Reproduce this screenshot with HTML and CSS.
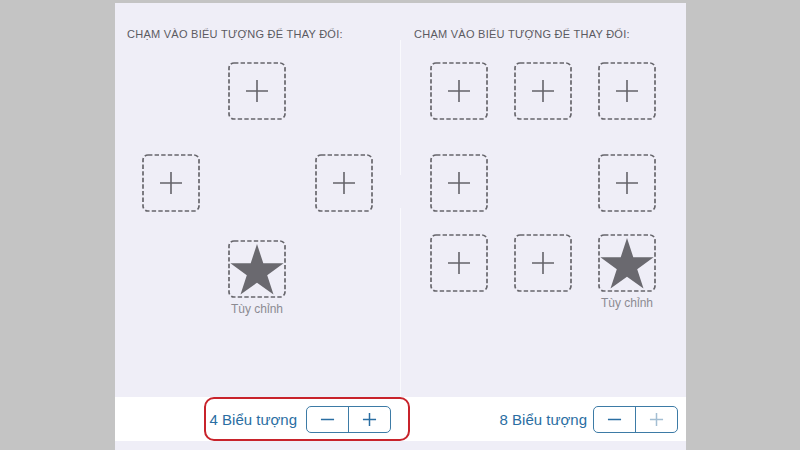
FILE: index.html
```html
<!DOCTYPE html>
<html lang="vi">
<head>
  <meta charset="UTF-8">
  <title>Biểu tượng</title>
  <link rel="stylesheet" href="styles.css">
</head>
<body>
  <div class="screen">
    <div class="panes">
      <!-- 4 icon layout -->
      <section class="pane pane-left">
        <h2 class="hint">CHẠM VÀO BIỂU TƯỢNG ĐỂ THAY ĐỔI:</h2>
        <div class="slots slots-4">
          <div class="slot a-top"><svg viewBox="0 0 58 58"><rect class="frame" x="1" y="1" width="56" height="56" rx="5"/><path class="plus" d="M18 29H40M29 18V40"/></svg></div>
          <div class="slot a-left"><svg viewBox="0 0 58 58"><rect class="frame" x="1" y="1" width="56" height="56" rx="5"/><path class="plus" d="M18 29H40M29 18V40"/></svg></div>
          <div class="slot a-right"><svg viewBox="0 0 58 58"><rect class="frame" x="1" y="1" width="56" height="56" rx="5"/><path class="plus" d="M18 29H40M29 18V40"/></svg></div>
          <div class="slot-custom a-bottom">
            <div class="slot"><svg viewBox="0 0 58 58"><rect class="frame" x="1" y="1" width="56" height="56" rx="5"/><polygon class="star" points="29,4 35.3,23.3 55.6,23.3 39.2,35.3 45.5,54.6 29,42.7 12.5,54.6 18.8,35.3 2.4,23.3 22.7,23.3"/></svg></div>
            <span class="slot-label">Tùy chỉnh</span>
          </div>
        </div>
      </section>

      <div class="divider"><span></span><span></span></div>

      <!-- 8 icon layout -->
      <section class="pane pane-right">
        <h2 class="hint">CHẠM VÀO BIỂU TƯỢNG ĐỂ THAY ĐỔI:</h2>
        <div class="slots slots-8">
          <div class="slot r1 c1"><svg viewBox="0 0 58 58"><rect class="frame" x="1" y="1" width="56" height="56" rx="5"/><path class="plus" d="M18 29H40M29 18V40"/></svg></div>
          <div class="slot r1 c2"><svg viewBox="0 0 58 58"><rect class="frame" x="1" y="1" width="56" height="56" rx="5"/><path class="plus" d="M18 29H40M29 18V40"/></svg></div>
          <div class="slot r1 c3"><svg viewBox="0 0 58 58"><rect class="frame" x="1" y="1" width="56" height="56" rx="5"/><path class="plus" d="M18 29H40M29 18V40"/></svg></div>
          <div class="slot r2 c1"><svg viewBox="0 0 58 58"><rect class="frame" x="1" y="1" width="56" height="56" rx="5"/><path class="plus" d="M18 29H40M29 18V40"/></svg></div>
          <div class="slot r2 c3"><svg viewBox="0 0 58 58"><rect class="frame" x="1" y="1" width="56" height="56" rx="5"/><path class="plus" d="M18 29H40M29 18V40"/></svg></div>
          <div class="slot r3 c1"><svg viewBox="0 0 58 58"><rect class="frame" x="1" y="1" width="56" height="56" rx="5"/><path class="plus" d="M18 29H40M29 18V40"/></svg></div>
          <div class="slot r3 c2"><svg viewBox="0 0 58 58"><rect class="frame" x="1" y="1" width="56" height="56" rx="5"/><path class="plus" d="M18 29H40M29 18V40"/></svg></div>
          <div class="slot-custom r3 c3">
            <div class="slot"><svg viewBox="0 0 58 58"><rect class="frame" x="1" y="1" width="56" height="56" rx="5"/><polygon class="star" points="29,4 35.3,23.3 55.6,23.3 39.2,35.3 45.5,54.6 29,42.7 12.5,54.6 18.8,35.3 2.4,23.3 22.7,23.3"/></svg></div>
            <span class="slot-label">Tùy chỉnh</span>
          </div>
        </div>
      </section>
    </div>

    <!-- Bottom toolbar -->
    <div class="toolbar">
      <div class="toolbar-half toolbar-left">
        <div class="highlight">
          <span class="count">4 Biểu tượng</span>
          <div class="stepper">
            <button class="step"><svg viewBox="0 0 16 16"><path d="M1 8H15"/></svg></button>
            <button class="step"><svg viewBox="0 0 16 16"><path d="M1 8H15M8 1V15"/></svg></button>
          </div>
        </div>
      </div>
      <div class="toolbar-half toolbar-right">
        <span class="count">8 Biểu tượng</span>
        <div class="stepper">
          <button class="step"><svg viewBox="0 0 16 16"><path d="M1 8H15"/></svg></button>
          <button class="step disabled"><svg viewBox="0 0 16 16"><path d="M1 8H15M8 1V15"/></svg></button>
        </div>
      </div>
    </div>
  </div>
</body>
</html>
```

FILE: styles.css
```css
/* General */
* {
  margin: 0;
  padding: 0;
  box-sizing: border-box;
}

body {
  background-color: #c4c4c4;
  font-family: "Liberation Sans", Arial, sans-serif;
  height: 450px;
  overflow: hidden;
}

.screen {
  width: 571px;
  height: 447px;
  margin: 3px 0 0 115px;
  background-color: #efeef7;
}

.panes {
  display: flex;
  height: 394px;
}

.pane {
  width: 285px;
  padding-top: 25px;
}

.pane-left {
  padding-left: 12px;
}

.pane-right {
  width: 285px;
  padding-left: 13px;
}

.hint {
  font-size: 11px;
  font-weight: normal;
  line-height: 13px;
  color: #5b5a61;
  letter-spacing: 0.26px;
}

/* Icon slots */
.slots {
  display: grid;
  margin-top: 21px;
}

.slots-4 {
  margin-left: 15px;
  grid-template-columns: 58px 28px 58px 29px 58px;
  grid-template-rows: 58px 34px 58px 28px auto;
  grid-template-areas:
    ".    . top   . ."
    ".    . .     . ."
    "left . .     . right"
    ".    . .     . ."
    ".    . bottom . .";
}

.a-top { grid-area: top; }
.a-left { grid-area: left; }
.a-right { grid-area: right; }
.a-bottom { grid-area: bottom; }

.slots-8 {
  margin-left: 16px;
  grid-template-columns: 58px 26px 58px 26px 58px;
  grid-template-rows: 58px 34px 58px 22px auto;
}

.r1 { grid-row: 1; }
.r2 { grid-row: 3; }
.r3 { grid-row: 5; }
.c1 { grid-column: 1; }
.c2 { grid-column: 3; }
.c3 { grid-column: 5; }

.slot {
  width: 58px;
  height: 58px;
}

.slot svg {
  display: block;
  width: 58px;
  height: 58px;
  overflow: visible;
}

.frame {
  fill: none;
  stroke: #67666c;
  stroke-width: 1.7;
  stroke-dasharray: 4.4 2.2;
}

.plus {
  fill: none;
  stroke: #646369;
  stroke-width: 1.6;
}

.star {
  fill: #6a696f;
}

.slot-custom {
  display: flex;
  flex-direction: column;
  align-items: center;
  width: 58px;
}

.slot-label {
  margin-top: 4px;
  font-size: 12px;
  line-height: 14px;
  color: #8c8b92;
  white-space: nowrap;
}

/* Column divider */
.divider {
  display: flex;
  flex-direction: column;
  gap: 33px;
  width: 1px;
  padding-top: 37px;
}

.divider span {
  display: block;
  width: 1px;
  background-color: #f9f9fd;
}

.divider span:first-child {
  height: 135px;
}

.divider span:last-child {
  flex: 1;
}

/* Toolbar */
.toolbar {
  display: flex;
  height: 44px;
  background-color: #ffffff;
}

.toolbar-half {
  display: flex;
  align-items: center;
  justify-content: flex-end;
}

.toolbar-left {
  width: 285px;
}

.toolbar-right {
  width: 286px;
  gap: 6px;
  padding-right: 8px;
}

.highlight {
  display: flex;
  align-items: center;
  gap: 9px;
  height: 44px;
  margin-right: -10px;
  padding: 0 17px 0 4px;
  border: 2px solid #c8232b;
  border-radius: 10px;
}

.count {
  font-family: "Liberation Sans", Arial, sans-serif;
  font-size: 15px;
  color: #2a6ea2;
  white-space: nowrap;
}

.stepper {
  display: flex;
  width: 85px;
  height: 27px;
  border: 1px solid #3d7ba6;
  border-radius: 5px;
  overflow: hidden;
}

.step {
  flex: 1;
  display: flex;
  align-items: center;
  justify-content: center;
  background: none;
  border: none;
}

.step + .step {
  border-left: 1px solid #3d7ba6;
}

.step svg {
  width: 15px;
  height: 15px;
  fill: none;
  stroke: #2a6ea2;
  stroke-width: 1.6;
}

.step.disabled svg {
  stroke: #a3bed3;
}
```
